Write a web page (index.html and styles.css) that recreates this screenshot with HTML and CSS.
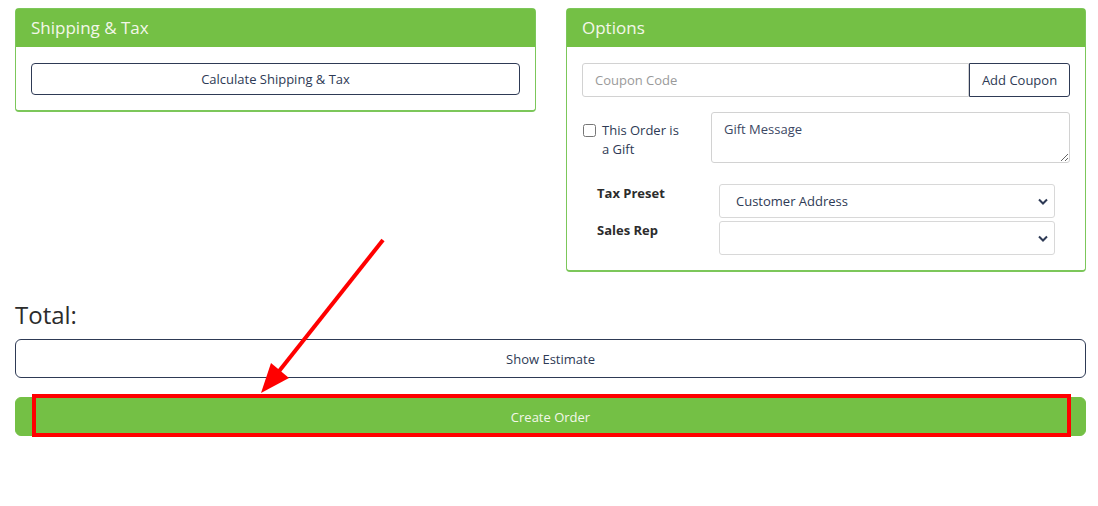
FILE: index.html
```html
<!DOCTYPE html>
<html lang="en">
<head>
    <meta charset="UTF-8">
    <title>Order Options</title>
    <link rel="stylesheet" href="styles.css">
</head>
<body>
    <div class="page">
        <div class="columns">
            <div class="card">
                <div class="card-header">Shipping &amp; Tax</div>
                <div class="card-body">
                    <button class="btn btn-outline btn-block">Calculate Shipping &amp; Tax</button>
                </div>
            </div>
            <div class="card">
                <div class="card-header">Options</div>
                <div class="card-body">
                    <div class="coupon-group">
                        <input type="text" class="form-control" placeholder="Coupon Code">
                        <button class="btn btn-outline btn-addon">Add Coupon</button>
                    </div>
                    <div class="gift-row">
                        <label class="gift-check">
                            <input type="checkbox">
                            <span>This Order is a Gift</span>
                        </label>
                        <textarea class="form-control gift-message" placeholder="Gift Message"></textarea>
                    </div>
                    <div class="select-grid">
                        <label class="field-label">Tax Preset</label>
                        <select class="form-select">
                            <option>Customer Address</option>
                        </select>
                        <label class="field-label">Sales Rep</label>
                        <select class="form-select">
                            <option></option>
                        </select>
                    </div>
                </div>
            </div>
        </div>

        <h3 class="total">Total:</h3>
        <button class="btn btn-outline btn-block btn-tall">Show Estimate</button>
        <button class="btn btn-green btn-block btn-tall create-order">Create Order</button>

        <!-- annotation -->
        <svg class="annotation" width="1098" height="506" viewBox="0 0 1098 506">
            <line x1="383" y1="240" x2="276" y2="375" stroke="#ff0000" stroke-width="4"/>
            <polygon points="261,393 289,378 271,363" fill="#ff0000"/>
            <rect x="34" y="396" width="1035" height="39" fill="none" stroke="#ff0000" stroke-width="4"/>
        </svg>
    </div>
</body>
</html>
```

FILE: styles.css
```css
body {
    margin: 0;
    font-family: "Open Sans", "Liberation Sans", sans-serif;
    color: #2e3a55;
    background: #fff;
}
.page {
    position: relative;
    padding: 8px 12px 0 15px;
    height: 498px;
}
.columns {
    display: grid;
    grid-template-columns: 521px 520px;
    column-gap: 30px;
    align-items: start;
}
.card {
    border: 1px solid #7cc75a;
    border-bottom-width: 2px;
    border-radius: 4px;
    background: #fff;
}
.card-header {
    background-color: #74c045;
    color: #f3f7e9;
    font-size: 17px;
    height: 38px;
    line-height: 37px;
    padding: 0 15px;
}
.card-body {
    padding: 16px 15px 15px;
}
.btn {
    font-family: inherit;
    font-size: 13px;
    cursor: pointer;
    border-radius: 4px;
    background: #fff;
}
.btn-outline {
    border: 1px solid #2e3a55;
    color: #2e3a55;
}
.btn-block {
    display: block;
    width: 100%;
    height: 32px;
}
.btn-tall {
    height: 39px;
    border-radius: 6px;
}
.btn-green {
    background-color: #74c045;
    border: 1px solid #74c045;
    color: #f3f7e9;
}
.form-control {
    font-family: inherit;
    font-size: 13px;
    color: #2e3a55;
    border: 1px solid #d2d2d2;
    border-radius: 3px;
    padding: 0 12px;
    box-sizing: border-box;
}
.form-control::placeholder {
    color: #9a9a9a;
}
.coupon-group {
    display: flex;
    height: 34px;
}
.coupon-group .form-control {
    flex: 1;
    height: 34px;
    border-radius: 3px 0 0 3px;
}
.btn-addon {
    width: 101px;
    height: 34px;
    border-radius: 0 3px 3px 0;
    padding: 0;
}
.gift-row {
    display: grid;
    grid-template-columns: 114px 1fr;
    column-gap: 15px;
    margin-top: 15px;
}
.gift-check {
    display: flex;
    align-items: flex-start;
    font-size: 13px;
    line-height: 19px;
    padding-top: 9px;
}
.gift-check input {
    width: 13px;
    height: 13px;
    margin: 3px 6px 0 1px;
    flex: none;
}
.gift-check span {
    width: 84px;
}
.gift-message {
    height: 51px;
    padding: 7px 12px;
    resize: vertical;
}
.gift-message::placeholder {
    color: #3c4763;
}
.select-grid {
    display: grid;
    grid-template-columns: 107px 1fr;
    column-gap: 15px;
    row-gap: 3px;
    margin: 21px 15px 0 15px;
}
.field-label {
    font-size: 13px;
    font-weight: bold;
    color: #2c2c2c;
}
.form-select {
    font-family: inherit;
    font-size: 13px;
    color: #2e3a55;
    height: 34px;
    border: 1px solid #d8d8d8;
    border-radius: 3px;
    padding: 0 30px 0 16px;
    background: #fff url("data:image/svg+xml,%3Csvg xmlns='http://www.w3.org/2000/svg' width='10' height='7' viewBox='0 0 10 7'%3E%3Cpath d='M1 1.5l4 4 4-4' fill='none' stroke='%232e3a55' stroke-width='2'/%3E%3C/svg%3E") no-repeat right 6px center;
    appearance: none;
    -webkit-appearance: none;
}
.total {
    font-size: 24px;
    font-weight: normal;
    color: #2c2c2c;
    margin: 26px 0 7px;
    line-height: 34px;
}
.create-order {
    margin-top: 19px;
}
/* red annotation drawn on top of the page */
.annotation {
    position: absolute;
    left: 0;
    top: 0;
    pointer-events: none;
}
```
